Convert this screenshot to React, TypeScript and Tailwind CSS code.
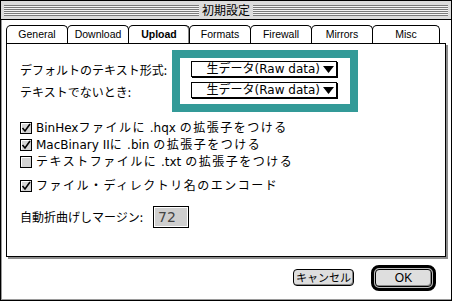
import React from "react";

const tabs = [
  { label: "General", w: "w-[62px]" },
  { label: "Download", w: "w-[62px]" },
  { label: "Upload", w: "w-[62px]", active: true },
  { label: "Formats", w: "w-[62px]" },
  { label: "Firewall", w: "w-[62px]" },
  { label: "Mirrors", w: "w-[62px]" },
  { label: "Misc", w: "w-[68px]" },
];

const checks = [
  { text: "BinHexファイルに .hqx の拡張子をつける", on: true },
  { text: "MacBinary IIに .bin の拡張子をつける", on: true },
  { text: "テキストファイルに .txt の拡張子をつける", on: false },
];

// kana/kanji runs are set a little looser than the latin runs
const Mixed = ({ text }: { text: string }) => (
  <>
    {text.split(/([\x20-\x7e]+)/).map((part, i) =>
      /^[\x20-\x7e]*$/.test(part) ? (
        <span key={i} className="whitespace-pre">{part}</span>
      ) : (
        <span key={i} className="tracking-[1.5px]">{part}</span>
      )
    )}
  </>
);

const Stripes = () => (
  <div className="flex-1 h-[11px] bg-[repeating-linear-gradient(to_bottom,#7a7a7a_0px,#7a7a7a_1px,#f4f4f4_1px,#f4f4f4_2px)]" />
);

const CheckBox = ({ on }: { on: boolean }) => (
  <svg width="12" height="12" viewBox="0 0 12 12" className="shrink-0">
    <rect x="0.5" y="0.5" width="11" height="11" fill="#d4d4d4" stroke="#000" />
    <path d="M1.5 10.5V1.5H10.5" stroke="#fff" fill="none" />
    {on && (
      <path d="M2.5 6l2.5 3 5-7" stroke="#000" strokeWidth="1.6" fill="none" />
    )}
  </svg>
);

const PopUp = () => (
  <div className="w-[146px] h-[16px] bg-white border border-black shadow-[1px_1px_0_#000] flex items-center justify-end pr-[2px]">
    <span className="text-[12px] leading-none text-black font-['DejaVu_Sans','Noto_Sans_CJK_JP',sans-serif]">
      生データ(Raw data)
    </span>
    <svg width="11" height="7" viewBox="0 0 11 7" className="ml-[3px]">
      <path d="M0 0h11L5.5 7z" fill="#000" />
    </svg>
  </div>
);

export default function App() {
  return (
    <div className="w-[452px] h-[301px] bg-white font-['Noto_Sans_CJK_JP',sans-serif] text-black">
      <div className="w-full h-full border border-black flex flex-col shadow-[inset_1px_-1px_0_#9a9a9a]">
        {/* title bar */}
        <div className="h-[19px] bg-[#dcdcdc] border-b border-black flex items-center px-[3px] shrink-0">
          <Stripes />
          <span className="px-[3px] text-[12px] leading-none">初期設定</span>
          <Stripes />
        </div>

        <div className="flex-1 flex flex-col pt-[5px] pl-[5px]">
          {/* tabs */}
          <div className="flex h-[18px]">
            {tabs.map((t) => (
              <div
                key={t.label}
                className={`${t.w} h-full border-x border-t border-black rounded-t-[5px] -mr-px flex items-center justify-center text-[10.5px] leading-none font-['Liberation_Sans',sans-serif] ${
                  t.active ? "font-bold shadow-[inset_-1px_0_0_#888]" : ""
                }`}
              >
                {t.label}
              </div>
            ))}
          </div>

          {/* panel */}
          <div className="w-[440px] h-[214px] border border-black shadow-[2px_2px_0_#8c8c8c] pl-[13px] flex flex-col">
            <div className="flex mt-[6px]">
              <div className="w-[152px] pt-[9px] flex flex-col text-[12px]">
                <div className="h-[22px] flex items-center">デフォルトのテキスト形式:</div>
                <div className="h-[22px] flex items-center">テキストでないとき:</div>
              </div>
              <div className="border-[8px] border-[#339a98] bg-white w-[186px] pl-[11px] pt-[3px] pb-[6px] flex flex-col gap-[5px]">
                <PopUp />
                <PopUp />
              </div>
            </div>

            <div className="mt-[7px] flex flex-col text-[12px] font-['DejaVu_Sans','Noto_Sans_CJK_JP',sans-serif]">
              {checks.map((c) => (
                <div key={c.text} className="h-[17px] flex items-center gap-[4px]">
                  <CheckBox on={c.on} />
                  <span className="leading-none">
                    <Mixed text={c.text} />
                  </span>
                </div>
              ))}
              <div className="h-[17px] mt-[7px] flex items-center gap-[4px]">
                <CheckBox on />
                <span className="leading-none tracking-[1.5px]">ファイル・ディレクトリ名のエンコード</span>
              </div>
            </div>

            <div className="mt-[12px] h-[22px] flex items-center text-[12px]">
              <span className="w-[133px]">自動折曲げしマージン:</span>
              <div className="w-[36px] h-[22px] border border-black p-[1px] bg-white">
                <div className="w-full h-full bg-[#cfcfcf] flex items-center pl-[3px] text-[14px] text-[#444] leading-none font-['DejaVu_Sans',sans-serif]">
                  72
                </div>
              </div>
            </div>
          </div>

          {/* buttons */}
          <div className="flex-1 flex items-center justify-end pr-[15px] gap-[17px] pb-[2px]">
            <button className="w-[61px] h-[17px] rounded-[4px] border border-black bg-[#dedede] shadow-[inset_-1px_-1px_0_#888] text-[11px] leading-none flex items-center justify-center">
              キャンセル
            </button>
            <div className="w-[65px] h-[26px] rounded-[8px] border-[3px] border-black bg-[#bdbdbd] p-[1px]">
              <button className="w-full h-full rounded-[4px] border border-black bg-[#dedede] shadow-[inset_-1px_-1px_0_#888] text-[12px] leading-none flex items-center justify-center font-['Liberation_Sans',sans-serif]">
                OK
              </button>
            </div>
          </div>
        </div>
      </div>
    </div>
  );
}
